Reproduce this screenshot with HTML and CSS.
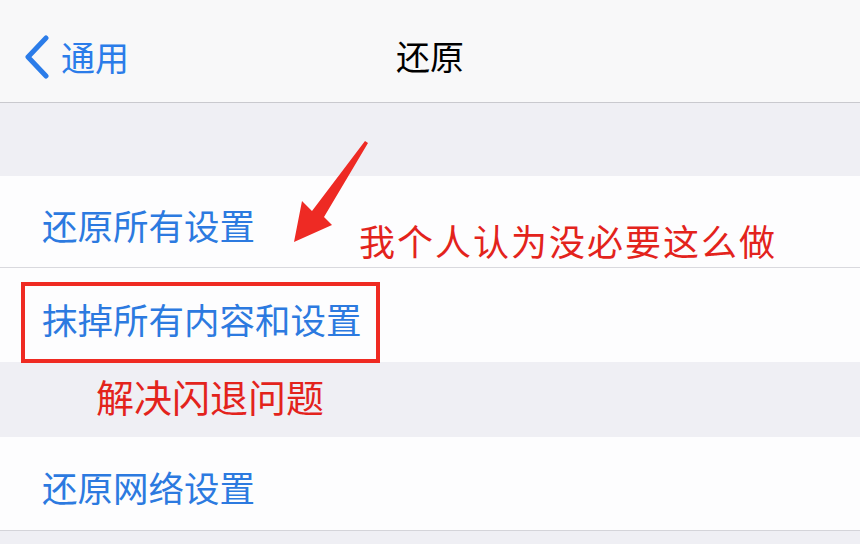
FILE: index.html
```html
<!DOCTYPE html>
<html lang="zh-CN">
<head>
    <meta charset="UTF-8">
    <meta name="viewport" content="width=device-width, initial-scale=1.0">
    <title>还原</title>
    <link rel="stylesheet" href="styles.css">
</head>
<body>

<header class="navbar">
    <a class="back" href="#">
        <svg class="chevron" width="28" height="44" viewBox="0 0 28 44">
            <polyline points="23,3 5,22 23,41" fill="none" stroke="#2b7ce9" stroke-width="5" stroke-linecap="round" stroke-linejoin="round"/>
        </svg>
        <span>通用</span>
    </a>
    <div class="title">还原</div>
</header>

<div class="spacer"></div>

<div class="group">
    <div class="row">还原所有设置</div>
    <div class="row tall">抹掉所有内容和设置</div>
</div>

<div class="spacer wide"></div>

<div class="group last">
    <div class="row">还原网络设置</div>
</div>

<!-- annotations drawn over the screenshot -->
<div class="mark-box"></div>
<div class="note note-top">我个人认为没必要这么做</div>
<div class="note note-bottom">解决闪退问题</div>
<svg class="arrow" width="90" height="110" viewBox="0 0 90 110">
    <polygon points="77,2 80,4 36,78 44,86 6,103 14,62 24,72" fill="#ee2a24"/>
</svg>

</body>
</html>
```

FILE: styles.css
```css
body {
    margin: 0;
    width: 860px;
    height: 544px;
    overflow: hidden;
    background: #efeff4;
    font-family: "PingFang SC", "Noto Sans CJK SC", sans-serif;
    position: relative;
}
.navbar {
    height: 102px;
    background: #f8f8f9;
    border-bottom: 1px solid #c9c9ce;
    display: flex;
    align-items: center;
    justify-content: center;
    position: relative;
}
.back {
    position: absolute;
    left: 23px;
    top: 35px;
    display: flex;
    align-items: center;
    gap: 10px;
    color: #2b7ce9;
    text-decoration: none;
    font-size: 34px;
    line-height: 44px;
}
.title {
    font-size: 34px;
    color: #000;
    padding-top: 8px;
}
.spacer {
    height: 73px;
}
.spacer.wide {
    height: 75px;
}
.group {
    background: #fdfdfe;
}
.row {
    height: 92px;
    padding-left: 42px;
    box-sizing: border-box;
    display: flex;
    align-items: center;
    padding-top: 6px;
    font-size: 35.5px;
    color: #2c7ae0;
    border-bottom: 1px solid #d9d9de;
}
.row.tall {
    height: 94px;
    border-bottom: none;
}
.group.last .row {
    height: 94px;
    border-bottom: 1px solid #d4d4d9;
}
.mark-box {
    position: absolute;
    left: 21px;
    top: 282px;
    width: 359px;
    height: 81px;
    box-sizing: border-box;
    border: 4px solid #ef2a22;
}
.note {
    position: absolute;
    color: #e3231c;
    white-space: nowrap;
}
.note-top {
    left: 359px;
    top: 216px;
    font-size: 36px;
    line-height: 48px;
    letter-spacing: 2px;
}
.note-bottom {
    left: 96px;
    top: 372px;
    font-size: 38px;
    line-height: 48px;
}
.arrow {
    position: absolute;
    left: 288px;
    top: 139px;
}
```
